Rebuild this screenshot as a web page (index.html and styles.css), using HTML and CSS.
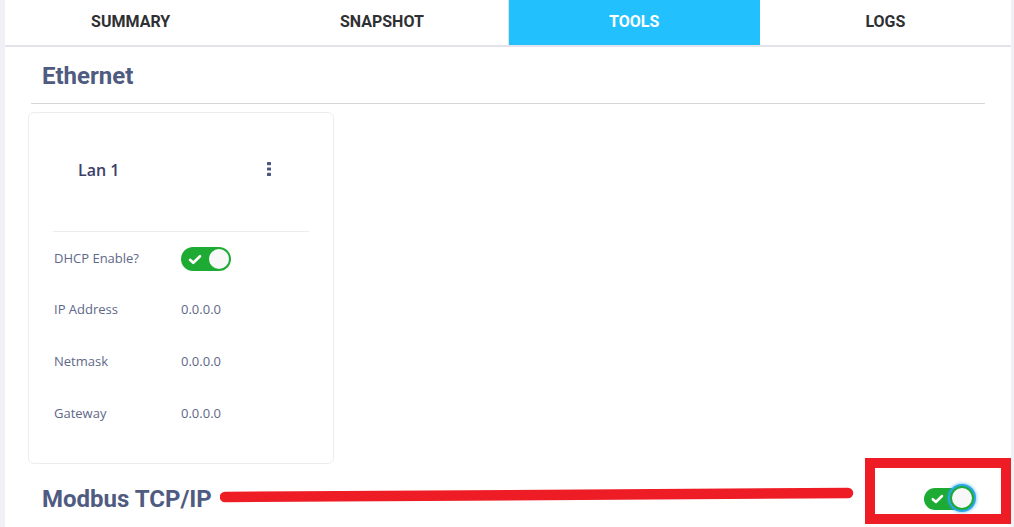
FILE: index.html
```html
<!DOCTYPE html>
<html>
<head>
<meta charset="utf-8">
<link rel="stylesheet" href="styles.css">
</head>
<body>
<div class="panel">
  <nav class="tabs">
    <div class="tab">SUMMARY</div>
    <div class="tab">SNAPSHOT</div>
    <div class="tab active">TOOLS</div>
    <div class="tab">LOGS</div>
  </nav>
  <h2 class="section-title">Ethernet</h2>
  <hr class="rule">
  <div class="card">
    <div class="card-head">
      <span class="card-title">Lan 1</span>
      <svg class="kebab" width="6" height="14" viewBox="0 0 6 14"><rect x="1" y="0" width="4" height="3.2" rx="0.6" fill="#4c5680"/><rect x="1" y="5.4" width="4" height="3.2" rx="0.6" fill="#4c5680"/><rect x="1" y="10.8" width="4" height="3.2" rx="0.6" fill="#4c5680"/></svg>
    </div>
    <div class="card-sep"></div>
    <div class="row first">
      <span class="label">DHCP Enable?</span>
      <span class="toggle"><svg class="check" width="14" height="11" viewBox="0 0 14 11"><path d="M2 5.8 L5.3 8.8 L12 2.2" fill="none" stroke="#fff" stroke-width="2.6" stroke-linecap="round" stroke-linejoin="round"/></svg><span class="knob"></span></span>
    </div>
    <div class="row"><span class="label">IP Address</span><span class="value">0.0.0.0</span></div>
    <div class="row"><span class="label">Netmask</span><span class="value">0.0.0.0</span></div>
    <div class="row"><span class="label">Gateway</span><span class="value">0.0.0.0</span></div>
  </div>
  <div class="modbus">
    <h2 class="section-title inline">Modbus TCP/IP</h2>
    <span class="toggle small focused"><svg class="check" width="13" height="10" viewBox="0 0 13 10"><path d="M1.8 5.2 L4.9 8 L11 2" fill="none" stroke="#fff" stroke-width="2.5" stroke-linecap="round" stroke-linejoin="round"/></svg><span class="knob"></span></span>
  </div>
  <svg class="annot-line" width="640" height="16" viewBox="0 0 640 16"><path d="M5 10 L628 6" stroke="#ee1c25" stroke-width="10.5" stroke-linecap="round"/></svg>
  <div class="annot-box"></div>
</div>
</body>
</html>
```

FILE: styles.css
```css
html, body {
  margin: 0;
  padding: 0;
  background: #f0f0f6;
  height: 527px;
  overflow: hidden;
}
.panel {
  position: relative;
  margin: 0 3px 0 5px;
  background: #fff;
  height: 527px;
  overflow: hidden;
}
.tabs {
  display: flex;
  height: 45px;
  border-bottom: 2px solid #e3e3e9;
}
.tab {
  flex: 1;
  display: flex;
  align-items: center;
  justify-content: center;
  font-family: Roboto, "Liberation Sans", sans-serif;
  font-weight: 700;
  font-size: 16px;
  color: #2f3033;
  padding-bottom: 2px;
}
.tab.active {
  background: #22c1fe;
  color: #fff;
  border-left: 1px solid #e3e3e9;
}
.section-title {
  margin: 0;
  padding: 15px 0 0 37px;
  font-family: Roboto, "Liberation Sans", sans-serif;
  font-weight: 700;
  font-size: 24px;
  line-height: 28px;
  color: #4f5b80;
}
.rule {
  margin: 13px 26px 0 26px;
  border: 0;
  border-top: 1px solid #d6d6d9;
  height: 0;
}
.card {
  margin: 8px 0 0 23px;
  width: 304px;
  height: 350px;
  border: 1px solid #ececf1;
  border-radius: 6px;
  box-sizing: content-box;
  font-family: "Open Sans", "Liberation Sans", sans-serif;
}
.card-head {
  display: flex;
  align-items: center;
  justify-content: space-between;
  height: 113px;
  padding: 0 61px 0 49px;
  box-sizing: border-box;
}
.card-title {
  font-size: 16px;
  font-weight: 600;
  color: #3c4068;
}
.kebab { display: block; margin-top: -1px; }
.card-sep {
  margin: 5px 24px 0 24px;
  border-top: 1px solid #ececf1;
}
.row {
  display: flex;
  align-items: center;
  height: 52px;
  padding-left: 25px;
}
.row.first { height: 51px; }
.row.first .toggle { margin-top: 3px; }
.label {
  width: 127px;
  font-size: 13px;
  color: #5e6889;
}
.value {
  font-size: 13px;
  color: #5e6889;
}
.toggle {
  position: relative;
  display: inline-flex;
  align-items: center;
  width: 50px;
  height: 24px;
  border-radius: 12px;
  background: #1eab34;
}
.toggle .check { margin-left: 7px; }
.knob {
  position: absolute;
  right: 2px;
  top: 2px;
  width: 20px;
  height: 20px;
  border-radius: 50%;
  background: #f8f8f8;
}
.modbus {
  display: flex;
  align-items: center;
  justify-content: space-between;
  margin-top: 21px;
  padding-right: 39px;
}
.section-title.inline { padding-top: 0; }
.toggle.small {
  width: 48px;
  height: 22px;
  border-radius: 11px;
}
.toggle.small .knob {
  width: 20px;
  height: 20px;
  border: 2px solid #1eab34;
  box-sizing: content-box;
  right: -2px;
  top: -2px;
  box-shadow: 0 0 0 2px #2aa6e8, 0 0 3px 3px rgba(42,166,232,0.5);
  background: #f8f8f8;
}
.annot-line {
  position: absolute;
  left: 215px;
  top: 487px;
}
.annot-box {
  position: absolute;
  left: 860px;
  top: 458px;
  width: 126px;
  height: 46px;
  border: 10px solid #ee1c25;
}
```
